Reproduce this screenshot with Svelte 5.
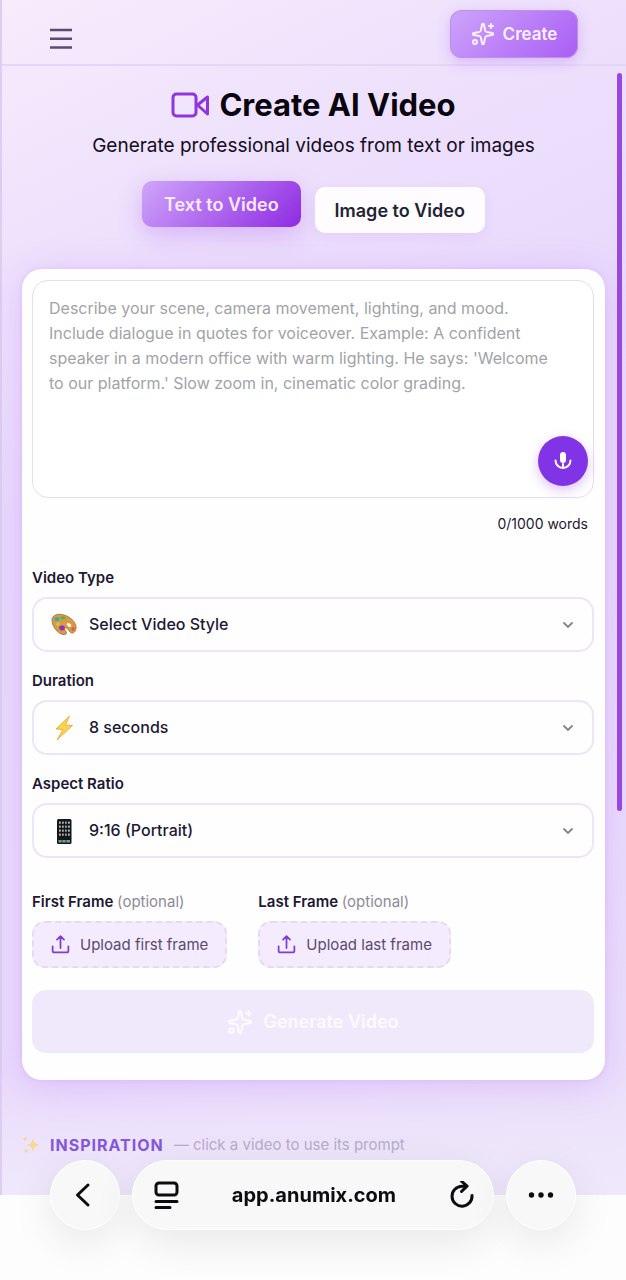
<script lang="ts">
	interface Field {
		id: string;
		label: string;
		icon: string;
		options: string[];
	}

	const fields: Field[] = [
		{
			id: 'type',
			label: 'Video Type',
			icon: 'palette',
			options: ['Select Video Style', 'Cinematic', 'Animation']
		},
		{ id: 'duration', label: 'Duration', icon: 'bolt', options: ['8 seconds', '4 seconds'] },
		{
			id: 'ratio',
			label: 'Aspect Ratio',
			icon: 'phone',
			options: ['9:16 (Portrait)', '16:9 (Landscape)']
		}
	];

	let mode = $state('text');
	let prompt = $state('');
	let words = $derived(prompt.split(/\s+/).filter(Boolean).length);
</script>

{#snippet sparkles(size: number)}
	<svg
		width={size}
		height={size}
		viewBox="0 0 24 24"
		fill="none"
		stroke="currentColor"
		stroke-width="2"
		stroke-linecap="round"
		stroke-linejoin="round"
		aria-hidden="true"
	>
		<path
			d="M11 2.8a1 1 0 0 1 2 0l1.1 5.6a2 2 0 0 0 1.5 1.5l5.6 1.1a1 1 0 0 1 0 2l-5.6 1.1a2 2 0 0 0-1.5 1.5L13 21.2a1 1 0 0 1-2 0l-1.1-5.6a2 2 0 0 0-1.5-1.5L2.8 13a1 1 0 0 1 0-2l5.6-1.1a2 2 0 0 0 1.5-1.5z"
		/>
		<path d="M20 2v4M22 4h-4" />
		<circle cx="4" cy="20" r="2" />
	</svg>
{/snippet}

{#snippet upload()}
	<svg
		width="21"
		height="21"
		viewBox="0 0 24 24"
		fill="none"
		stroke="#7c3fd0"
		stroke-width="2"
		stroke-linecap="round"
		stroke-linejoin="round"
		aria-hidden="true"
	>
		<path d="M3 14v5a2 2 0 0 0 2 2h14a2 2 0 0 0 2-2v-5M12 16V3M8 6.500l4-4 4 4" />
	</svg>
{/snippet}

<div class="page">
	<header>
		<button class="menu" aria-label="Menu">
			<svg width="22" height="22" viewBox="0 0 22 22" stroke="currentColor" stroke-width="2.500">
				<path d="M0 2h22M0 10.750h22M0 19.500h22" />
			</svg>
		</button>
		<button class="create">{@render sparkles(24)} Create</button>
	</header>

	<main>
		<h1>
			<svg width="38" height="28" viewBox="0 0 38 28" fill="none" stroke="#8f35de" stroke-width="3">
				<rect x="2" y="3" width="23" height="22" rx="3.500" />
				<path d="M26.500 14 36.500 6v17z" stroke-linejoin="round" />
			</svg>
			Create AI Video
		</h1>
		<p class="subtitle">Generate professional videos from text or images</p>

		<div class="tabs">
			<button class:active={mode === 'text'} onclick={() => (mode = 'text')}>Text to Video</button>
			<button class:active={mode === 'image'} onclick={() => (mode = 'image')}>
				Image to Video
			</button>
		</div>

		<section class="card">
			<div class="prompt">
				<textarea
					aria-label="Prompt"
					bind:value={prompt}
					placeholder="Describe your scene, camera movement, lighting, and mood. Include dialogue in quotes for voiceover. Example: A confident speaker in a modern office with warm lighting. He says: 'Welcome to our platform.' Slow zoom in, cinematic color grading."
				></textarea>
				<button class="mic" aria-label="Dictate">
					<svg width="20" height="20" viewBox="0 0 20 20" fill="none" stroke="#fff" stroke-width="2">
						<rect x="7" y="1" width="6" height="11" rx="3" fill="#fff" stroke="none" />
						<path d="M2.500 9.500a7.500 7.500 0 0 0 15 0M10 13v4" stroke-linecap="round" />
					</svg>
				</button>
			</div>
			<p class="count">{words}/1000 words</p>

			{#each fields as field}
				<div class="field">
					<label for={field.id}>{field.label}</label>
					<div class="select">
						<svg class="emoji" width="26" height="26" viewBox="0 0 26 26" aria-hidden="true">
							{#if field.icon === 'palette'}
								<path
									d="M1 8C1 3 7 1 13 3c7 2 13 8 12 14-1 4-4 5-6 3-2-2-3-5-5-4-2 1 3 4 1 6C11 25 1 17 1 8z"
									fill="#d89a45"
									stroke="#a8692c"
									stroke-width=".8"
								/>
								<ellipse cx="18" cy="13" rx="2.500" ry="1.600" fill="#fff" transform="rotate(35 18 13)" />
								<ellipse cx="6" cy="7" rx="2.600" ry="2" fill="#2fa9c4" />
								<ellipse cx="12" cy="6" rx="2.600" ry="1.800" fill="#56b34b" />
								<ellipse cx="7" cy="12" rx="2" ry="1.800" fill="#c8cf3b" />
								<ellipse cx="11" cy="16" rx="2.800" ry="2.400" fill="#8a35b8" />
								<ellipse cx="22" cy="17" rx="1.600" ry="2" fill="#e2603b" />
							{:else if field.icon === 'bolt'}
								<path
									d="M18.500 1 5 14l7 .500L6 25l15.500-14.500-7-.500z"
									fill="#fbd34d"
									stroke="#e5a52b"
									stroke-width=".8"
									stroke-linejoin="round"
								/>
							{:else}
								<rect x="6" y="1" width="14.500" height="25" rx="1.500" fill="#15161a" />
								{#each [4, 8, 12, 16] as y}
									{#each [8, 11, 14, 17] as x, i}
										<rect
											{x}
											y={y - 0.5}
											width="1.800"
											height="2.200"
											rx=".5"
											fill={['#a9c5b5', '#b9aaa4', '#8fb0ba', '#c2b5aa'][(i + y) % 4]}
										/>
									{/each}
								{/each}
								<rect x="7.500" y="22" width="11.500" height="2.500" rx=".5" fill="#70a394" />
								<path d="M11 22v2.500M15 22v2.500" stroke="#15161a" stroke-width=".7" />
							{/if}
						</svg>
						<select id={field.id}>
							{#each field.options as option}
								<option>{option}</option>
							{/each}
						</select>
						<svg class="chevron" width="12" height="8" viewBox="0 0 12 8" fill="none">
							<path d="m2 2 4 4 4-4" stroke="#85828c" stroke-width="1.800" stroke-linecap="round" />
						</svg>
					</div>
				</div>
			{/each}

			<div class="frames">
				<div>
					<p>First Frame <span>(optional)</span></p>
					<button class="upload">{@render upload()} Upload first frame</button>
				</div>
				<div>
					<p>Last Frame <span>(optional)</span></p>
					<button class="upload">{@render upload()} Upload last frame</button>
				</div>
			</div>

			<button class="generate" disabled>{@render sparkles(26)} Generate Video</button>
		</section>

		<div class="inspiration">
			<svg width="18" height="18" viewBox="0 0 18 18" fill="#f6d98a" aria-hidden="true">
				<path d="M11 2c.8 4.500 2 6 6.500 7-4.500 1-5.700 2.500-6.500 7-.8-4.500-2-6-6-7 4-1 5.200-2.500 6-7z" />
				<path d="M3 0c.3 2 .8 2.500 2.500 3C3.800 3.500 3.300 4 3 6 2.700 4 2.200 3.500.5 3 2.200 2.500 2.700 2 3 0z" />
				<path d="M4 12c.3 2 .8 2.500 2.500 3-1.700.5-2.200 1-2.500 3-.3-2-.8-2.500-2.500-3 1.700-.5 2.200-1 2.500-3z" />
			</svg>
			<h2>Inspiration</h2>
			<span>— click a video to use its prompt</span>
		</div>
	</main>

	<div class="scrollbar"></div>
</div>

<nav>
	<button class="round" aria-label="Back">
		<svg width="28" height="28" viewBox="0 0 28 28">
			<path d="M17 4 6.500 14 17 24" />
		</svg>
	</button>
	<div class="address">
		<button aria-label="Page options">
			<svg width="28" height="28" viewBox="0 0 28 28">
				<rect x="3" y="2" width="21" height="12" rx="3" />
				<path d="M3 20.500h21M3 26.500h14" />
			</svg>
		</button>
		<a href="#top">app.anumix.com</a>
		<button aria-label="Reload">
			<svg width="28" height="28" viewBox="0 0 28 28">
				<path d="M19 5.200h-4A10 10 0 1 0 25 14.500" />
				<path d="M14.500.200 20 5.200l-5.500 5.300" />
			</svg>
		</button>
	</div>
	<button class="round" aria-label="More">
		<svg class="dots" width="28" height="28" viewBox="0 0 28 28">
			<circle cx="4.500" cy="14" r="2.700" />
			<circle cx="14" cy="14" r="2.700" />
			<circle cx="23.500" cy="14" r="2.700" />
		</svg>
	</button>
</nav>

<style>
	:global(body) {
		background: #fdfdfd;
		font-family: Inter, 'Liberation Sans', sans-serif;
		color: #1e1832;
	}

	button,
	textarea,
	select {
		font: inherit;
		color: inherit;
		border: none;
		padding: 0;
		background: none;
	}

	svg {
		display: block;
		flex: none;
	}

	h1,
	h2,
	p {
		margin: 0;
	}

	.page {
		position: relative;
		box-sizing: border-box;
		border-left: 2px solid #decdf3;
		background:
			linear-gradient(to bottom, transparent 90%, #efe8fb 100%),
			linear-gradient(155deg, #f6ecfc 0%, #efe2fc 16%, #e9dafc 35%, #eadbfc 75%, #ebe2fa 100%);
	}

	header {
		display: flex;
		justify-content: space-between;
		align-items: center;
		box-sizing: border-box;
		height: 66px;
		padding: 4px 48px 0;
		border-bottom: 2px solid #e4d6f8;
	}

	.menu {
		color: #5c4a74;
		margin-top: 10px;
	}

	.create {
		display: flex;
		align-items: center;
		justify-content: center;
		gap: 8px;
		width: 128px;
		height: 48px;
		border-radius: 12px;
		background: linear-gradient(135deg, #cda5fa, #a95df5);
		box-shadow:
			0 0 0 1px #bd8ff0 inset,
			0 4px 14px rgba(168, 85, 247, 0.3);
		color: #fdf0ff;
		font-size: 17px;
		font-weight: 600;
	}

	main {
		padding: 19px 21px 40px 20px;
	}

	h1 {
		display: flex;
		justify-content: center;
		align-items: center;
		gap: 10px;
		font-size: 31px;
		line-height: 40px;
		font-weight: 700;
		color: #08050e;
	}

	.subtitle {
		margin-top: 7px;
		font-size: 19px;
		line-height: 28px;
		text-align: center;
		color: #130d1c;
	}

	.tabs {
		display: flex;
		justify-content: center;
		align-items: flex-end;
		gap: 14px;
		margin: 21px 0 36px;

		button {
			height: 46px;
			padding: 0 20px;
			border-radius: 10px;
			background: #fefcff;
			box-shadow: 0 4px 12px rgba(147, 51, 234, 0.08);
			font-size: 18px;
			font-weight: 600;
			color: #1f2433;
		}

		.active {
			margin-bottom: 6px;
			padding: 0 22px;
			background: linear-gradient(135deg, #cfa5fa, #8e2be2);
			box-shadow: 0 8px 24px rgba(147, 51, 234, 0.25);
			color: #fbeaff;
		}
	}

	.card {
		padding: 11px 11px 27px 10px;
		border-radius: 20px;
		background: #fffeff;
		box-shadow:
			0 0 4px rgba(168, 85, 247, 0.15),
			0 6px 36px rgba(168, 85, 247, 0.22);
	}

	.prompt {
		position: relative;
	}

	textarea {
		display: block;
		box-sizing: border-box;
		width: 100%;
		height: 218px;
		padding: 15px 28px 15px 16px;
		border: 1px solid #e6dcf4;
		border-radius: 16px;
		resize: none;
		font-size: 16px;
		line-height: 25px;
		background: #fff;
	}

	textarea::placeholder {
		color: #a2a3a8;
	}

	.mic {
		position: absolute;
		right: 6px;
		bottom: 12px;
		display: grid;
		place-items: center;
		width: 50px;
		height: 50px;
		border-radius: 50%;
		background: #8133e6;
		box-shadow: 0 4px 12px rgba(147, 51, 234, 0.3);
	}

	.count {
		margin: 16px 6px 34px;
		font-size: 14px;
		line-height: 20px;
		text-align: right;
	}

	.field {
		margin-bottom: 19px;
	}

	label,
	.frames p {
		display: block;
		margin-bottom: 9px;
		font-size: 15px;
		line-height: 20px;
		font-weight: 600;
	}

	.select {
		position: relative;
	}

	select {
		appearance: none;
		display: block;
		box-sizing: border-box;
		width: 100%;
		height: 55px;
		padding: 0 40px 2px 55px;
		border: 2px solid #ece5f9;
		border-radius: 15px;
		font-size: 16px;
		font-weight: 500;
	}

	.emoji {
		position: absolute;
		left: 19px;
		top: 15px;
		pointer-events: none;
	}

	.chevron {
		position: absolute;
		right: 20px;
		top: 24px;
		pointer-events: none;
	}

	.frames {
		display: flex;
		gap: 31px;
		margin: 34px 0 22px;

		span {
			font-weight: 400;
			color: #8e8a98;
		}
	}

	.upload {
		display: flex;
		align-items: center;
		gap: 9px;
		height: 47px;
		padding: 0 17px 0 16px;
		border: 2px dashed #e6d9f1;
		border-radius: 13px;
		background: #f5ebfe;
		font-size: 15px;
		color: #5b4a6f;
	}

	.generate {
		display: flex;
		align-items: center;
		justify-content: center;
		gap: 10px;
		width: 100%;
		height: 63px;
		border-radius: 14px;
		background: #f0e9fc;
		font-size: 18px;
		font-weight: 600;
		color: #fcf9ff;
	}

	.inspiration {
		display: flex;
		align-items: center;
		gap: 10px;
		margin-top: 55px;
		line-height: 20px;
		font-size: 15px;
		color: #b8accb;

		h2 {
			font-size: 16px;
			font-weight: 700;
			letter-spacing: 1px;
			text-transform: uppercase;
			color: #8457dc;
		}
	}

	.scrollbar {
		position: absolute;
		top: 73px;
		right: 4px;
		width: 5px;
		height: 738px;
		border-radius: 3px;
		background: #9848e0;
	}

	nav {
		position: fixed;
		left: 0;
		right: 0;
		bottom: 0;
		display: flex;
		gap: 12px;
		padding: 0 50px 50px;

		svg {
			fill: none;
			stroke: #0d0d10;
			stroke-width: 3;
			stroke-linecap: round;
			stroke-linejoin: round;
		}

		.dots {
			fill: #0d0d10;
			stroke: none;
		}
	}

	.round,
	.address {
		height: 70px;
		box-sizing: border-box;
		border: 1px solid #fff;
		border-radius: 35px;
		background: #f8f8f9;
		box-shadow: 0 12px 44px rgba(0, 0, 0, 0.09);
	}

	.round {
		display: grid;
		place-items: center;
		width: 70px;
	}

	.address {
		display: flex;
		flex: 1;
		align-items: center;
		justify-content: space-between;
		padding: 0 18px 0 20px;

		a {
			font-size: 20px;
			font-weight: 700;
			color: #0d0d10;
			text-decoration: none;
		}
	}
</style>
